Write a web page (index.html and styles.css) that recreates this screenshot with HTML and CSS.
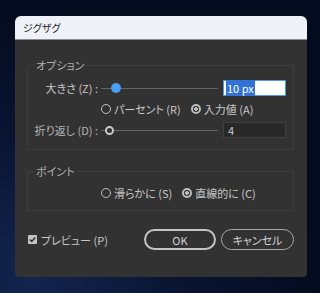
FILE: index.html
```html
<!DOCTYPE html>
<html lang="ja">
<head>
    <meta charset="UTF-8">
    <meta name="viewport" content="width=device-width, initial-scale=1.0">
    <title>ジグザグ</title>
    <link rel="stylesheet" href="styles.css">
</head>
<body>
    <div class="dialog">
        <div class="title-bar">ジグザグ</div>
        <div class="dialog-body">
            <fieldset class="group options">
                <legend>オプション</legend>
                <div class="option-grid">
                    <div class="label">大きさ (Z) :</div>
                    <div class="slider">
                        <div class="track"></div>
                        <div class="thumb thumb-filled"></div>
                    </div>
                    <div class="field field-active"><span class="selected">10 px</span></div>

                    <div class="radio-row">
                        <label class="radio"><span class="radio-dot"></span>パーセント (R)</label>
                        <label class="radio checked"><span class="radio-dot"></span>入力値 (A)</label>
                    </div>

                    <div class="label dim">折り返し (D) :</div>
                    <div class="slider">
                        <div class="track"></div>
                        <div class="thumb thumb-hollow"></div>
                    </div>
                    <div class="field">4</div>
                </div>
            </fieldset>

            <fieldset class="group points">
                <legend>ポイント</legend>
                <div class="radio-row">
                    <label class="radio"><span class="radio-dot"></span>滑らかに (S)</label>
                    <label class="radio checked"><span class="radio-dot"></span>直線的に (C)</label>
                </div>
            </fieldset>

            <div class="footer">
                <label class="checkbox">
                    <svg width="9" height="9" viewBox="0 0 9 9">
                        <rect x="0" y="0" width="9" height="9" rx="1" fill="#c4c4c4"/>
                        <path d="M2 4.6 L3.8 6.4 L7.2 2.6" fill="none" stroke="#2e2e2e" stroke-width="1.5"/>
                    </svg>
                    プレビュー (P)
                </label>
                <div class="buttons">
                    <button class="btn btn-default">OK</button>
                    <button class="btn">キャンセル</button>
                </div>
            </div>
        </div>
    </div>
</body>
</html>
```

FILE: styles.css
```css
body {
    margin: 0;
    height: 293px;
    overflow: hidden;
    font-family: "Noto Sans CJK JP", "Noto Sans", sans-serif;
    font-feature-settings: "palt";
    font-size: 11px;
    background: radial-gradient(ellipse at 10% 95%, #13254f 0%, #0a1533 35%, #050b1e 70%);
    padding-top: 16px;
    padding-left: 15px;
    box-sizing: border-box;
}
.dialog {
    width: 292px;
    height: 261px;
    background-color: #323232;
    border-radius: 6px 6px 4px 4px;
    overflow: hidden;
}
.title-bar {
    height: 23px;
    line-height: 23px;
    padding-left: 8px;
    background-color: #eef1f8;
    border-bottom: 1px solid #8c8c8c;
    color: #1e1e1e;
    font-size: 10px;
}
.dialog-body {
    padding: 18px 13px 0 12px;
}
.group {
    margin: 0;
    padding: 0;
    border: 1px solid #3d3d3d;
    min-width: 0;
}
.group legend {
    margin-left: 6px;
    padding: 0 2px;
    line-height: 14px;
    color: #b0b0b0;
}
.options {
    padding: 8px 0 11px 0;
}
.option-grid {
    display: grid;
    grid-template-columns: 70px 120px 68px;
    grid-template-rows: 16px 16px 16px;
    row-gap: 5px;
    align-items: center;
}
.option-grid .radio-row {
    grid-column: 2 / 4;
    padding-left: 3px;
}
.label {
    text-align: right;
    color: #c8c8c8;
    white-space: nowrap;
}
.label.dim {
    color: #b4b4b4;
}
.slider {
    position: relative;
    height: 16px;
}
.track {
    position: absolute;
    left: 3px;
    right: 0;
    top: 8px;
    height: 1px;
    background-color: #646464;
}
.thumb {
    position: absolute;
    top: 3px;
    width: 10px;
    height: 10px;
    border-radius: 50%;
    box-sizing: border-box;
}
.thumb-filled {
    left: 13px;
    background-color: #4a9ff5;
}
.thumb-hollow {
    left: 7px;
    width: 9px;
    height: 9px;
    top: 4px;
    border: 2px solid #c8c8c8;
    background-color: #323232;
}
.field {
    margin-left: 5px;
    height: 16px;
    box-sizing: border-box;
    border: 1px solid #404040;
    background-color: #282828;
    color: #cccccc;
    padding-left: 4px;
    line-height: 14px;
}
.field-active {
    background-color: #ffffff;
    border-color: #4c9ae8;
    padding-left: 2px;
}
.selected {
    background-color: #3372d5;
    color: #ffffff;
    padding: 0 1px;
}
.radio-row {
    display: flex;
    gap: 10px;
    color: #c8c8c8;
}
.radio {
    display: flex;
    align-items: center;
    gap: 3px;
    white-space: nowrap;
}
.radio-dot {
    width: 10px;
    height: 10px;
    box-sizing: border-box;
    border: 1.5px solid #c0c0c0;
    border-radius: 50%;
}
.radio.checked .radio-dot {
    border: 2px solid #bdbdbd;
    background: radial-gradient(circle, #bdbdbd 0 1.6px, #2c2c2c 2px);
}
.points {
    margin-top: 14px;
    padding: 7px 0 9px 0;
}
.points .radio-row {
    padding-left: 73px;
}
.footer {
    margin-top: 18px;
    display: flex;
    justify-content: space-between;
    align-items: center;
    padding-left: 1px;
}
.checkbox {
    display: flex;
    align-items: center;
    gap: 4px;
    color: #c8c8c8;
}
.buttons {
    display: flex;
    gap: 5px;
}
.btn {
    width: 73px;
    height: 21px;
    border-radius: 11px;
    border: 1.5px solid #a8a8a8;
    background-color: #323232;
    color: #d4d4d4;
    font-family: inherit;
    font-feature-settings: "palt";
    font-size: 11px;
    padding: 0;
}
.btn-default {
    width: 72px;
    border: 2px solid #c4c4c4;
}
```
